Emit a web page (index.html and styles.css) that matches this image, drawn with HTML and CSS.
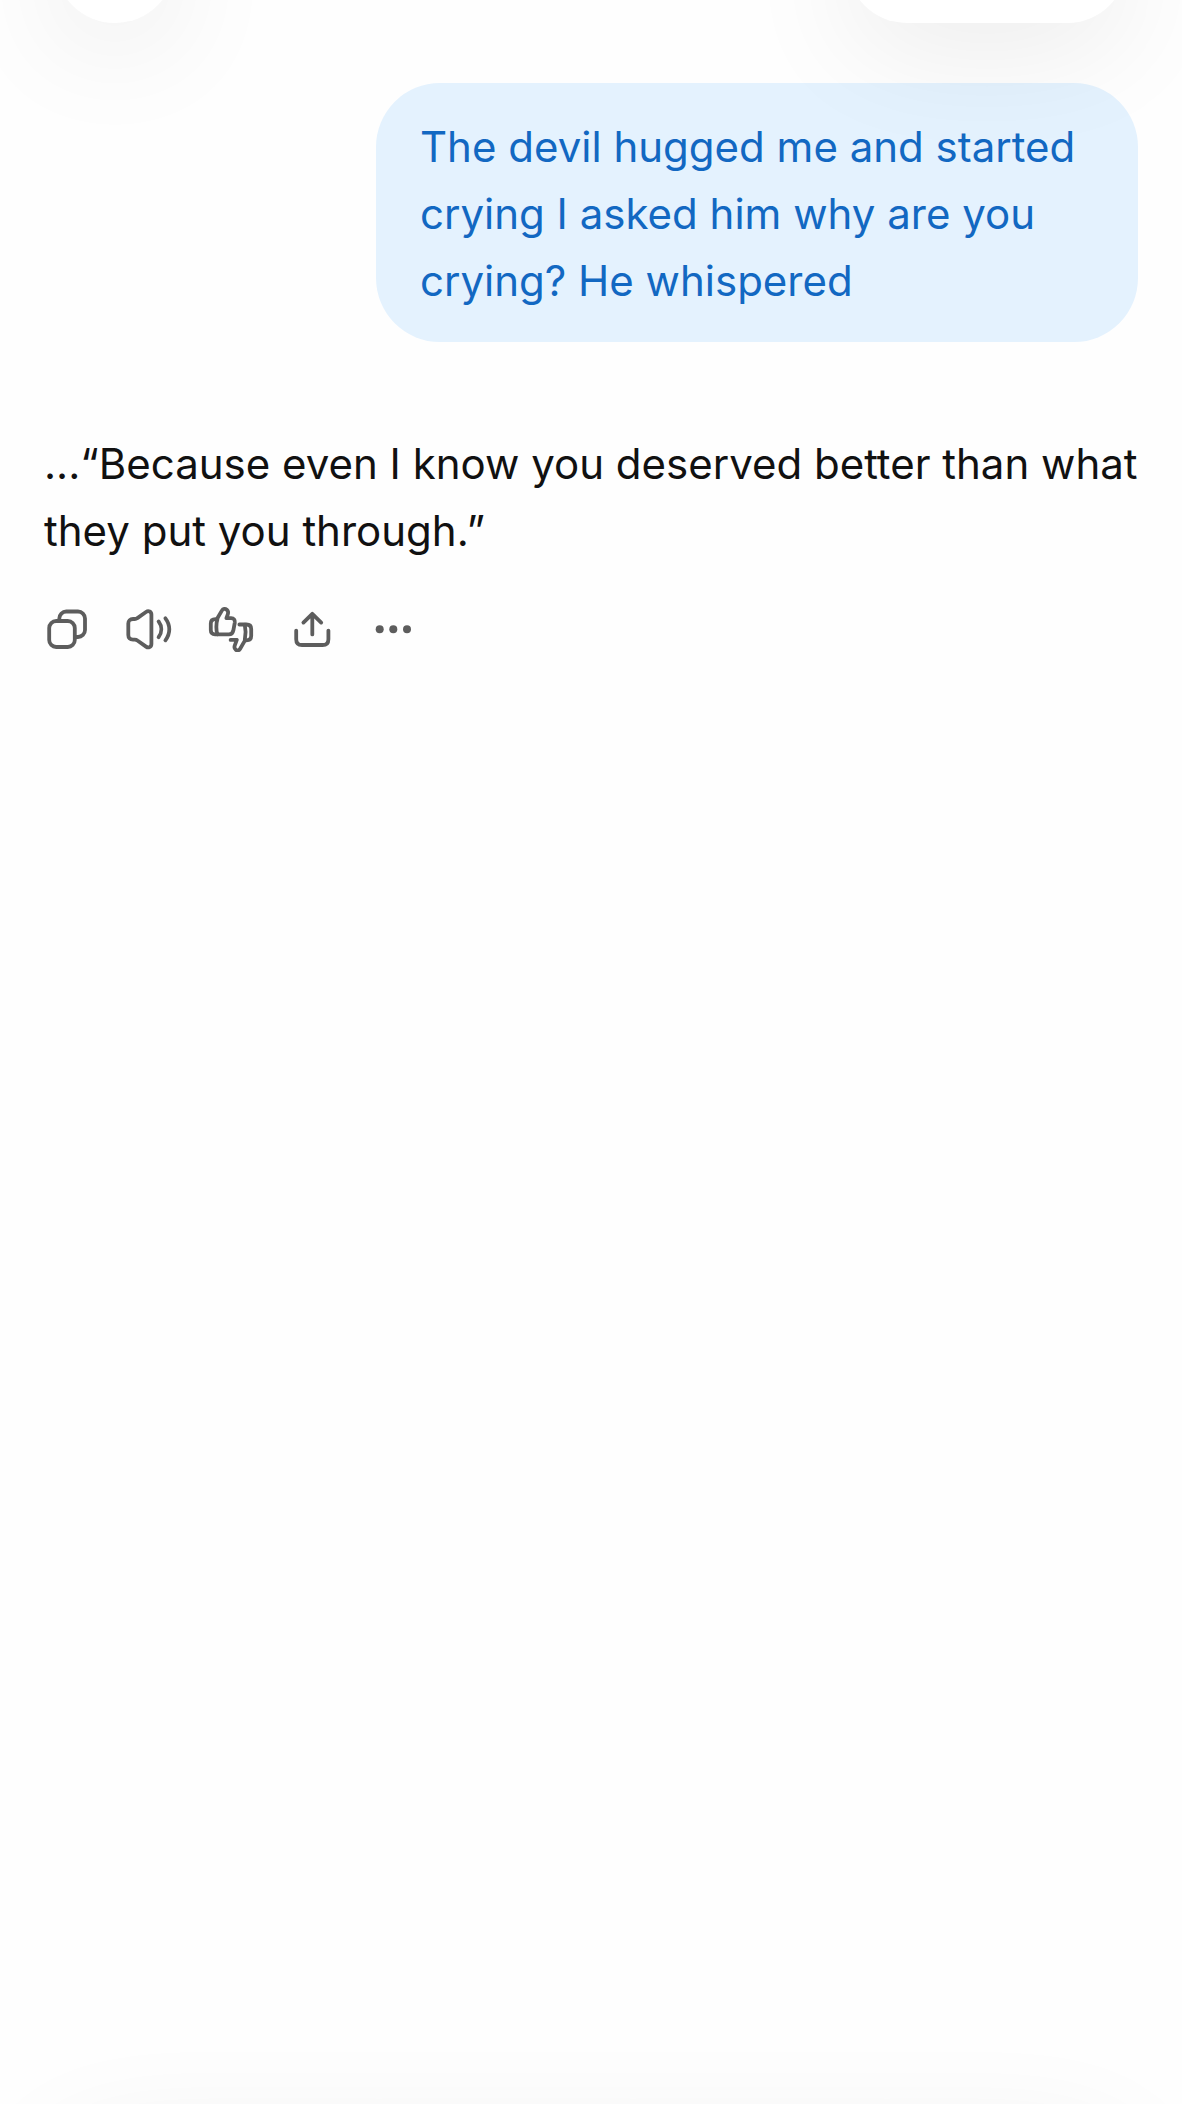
FILE: index.html
```html
<!DOCTYPE html>
<html lang="en">
<head>
    <meta charset="UTF-8">
    <meta name="viewport" content="width=device-width, initial-scale=1">
    <title>Chat</title>
    <link rel="stylesheet" href="styles.css">
</head>
<body>
    <header class="topbar">
        <button class="topbar-btn" aria-label="Menu"></button>
        <button class="topbar-btn topbar-pill" aria-label="Chat options"></button>
    </header>

    <main class="chat">
        <p class="bubble">The devil hugged me and started crying I asked him why are you crying? He whispered</p>

        <article class="answer">
            <p class="answer-text">...“Because even I know you deserved better than what they put you through.”</p>
            <div class="actions">
                <button class="action" aria-label="Copy">
                    <svg viewBox="0 0 46 46">
                        <rect x="5.2" y="15" width="25.6" height="26" rx="7"/>
                        <path d="M15.3 14v-1.5a7 7 0 0 1 7-7H34a7 7 0 0 1 7 7V24a7 7 0 0 1-7 7h-2"/>
                    </svg>
                </button>
                <button class="action" aria-label="Read aloud">
                    <svg viewBox="0 0 46 46">
                        <path d="M7 13h1.8c1 0 1.8-.3 2.6-.9L20 6c2.5-1.8 5.4-.4 5.4 2.6V38c0 3-2.9 4.4-5.4 2.6l-8.6-6.1c-.8-.6-1.6-.9-2.6-.9H7c-3 0-4.7-1.8-4.7-4.6V17.6C2.3 14.8 4 13 7 13z"/>
                        <path d="M32.6 15.4c3.6 4.8 3.6 11 0 15.8"/>
                        <path d="M39.4 12.3c5.2 6.8 5.2 15.2 0 22"/>
                    </svg>
                </button>
                <button class="action" aria-label="Rate response">
                    <svg viewBox="0 0 46 46">
                        <path d="M8.8 13.2L14 4.4c1-1.8 3.2-2 4.8-.7 1.5 1.3 1.6 3 1 4.7l-1.4 3.8h4.8c2.6 0 4 1.8 3.6 4.4l-1.4 7.5c-.5 2.6-2 4.3-4.6 4.3H7c-2.8 0-4.2-1.6-4.2-4.2v-6.6c0-3 1.8-4.4 4.6-4.4z"/>
                        <path d="M9.4 13.4c-1.4 4-1.4 11 0 14.8"/>
                        <path d="M31.4 18.5h7c3 0 4.8 1.6 4.8 4.5v6.8c0 3-1.8 4.6-4.8 4.6H37l-5 8.6c-.9 1.6-2.8 1.9-4.2.8-1.4-1.2-1.6-2.8-1-4.4l2-5.5h-6.2"/>
                        <path d="M36.8 18.8c.9 4 .9 11 0 15.2"/>
                    </svg>
                </button>
                <button class="action" aria-label="Share">
                    <svg viewBox="0 0 46 46">
                        <path d="M6.2 24.6v8.6c0 3.8 2 5.8 5.8 5.8h20.6c3.8 0 5.8-2 5.8-5.8v-8.6"/>
                        <path d="M22.3 28.4V8M13.4 16.6L22.3 7.8l8.9 8.8"/>
                    </svg>
                </button>
                <button class="action" aria-label="More">
                    <svg viewBox="0 0 46 46" class="dots">
                        <circle cx="7.7" cy="23.3" r="4"/>
                        <circle cx="21.3" cy="23.3" r="4"/>
                        <circle cx="35" cy="23.3" r="4"/>
                    </svg>
                </button>
            </div>
        </article>
    </main>

    <footer class="composer"></footer>
</body>
</html>
```

FILE: styles.css
```css
* {
    box-sizing: border-box;
}
body {
    margin: 0;
    background: #fefefe;
    color: #111;
    font-family: Inter, "Liberation Sans", sans-serif;
    font-size: 42px;
    line-height: 67px;
}
p {
    margin: 0;
}
button {
    padding: 0;
    border: none;
    background: none;
    cursor: pointer;
}

.topbar {
    position: fixed;
    top: -97px;
    left: 0;
    right: 0;
    display: flex;
    justify-content: space-between;
    padding: 0 55px;
    pointer-events: none;
}
.topbar-btn {
    width: 120px;
    height: 120px;
    border-radius: 60px;
    background: #fff;
    box-shadow: 0 24px 120px rgba(0, 0, 0, 0.08);
    pointer-events: auto;
}
.topbar-pill {
    width: 280px;
}

.chat {
    display: flex;
    flex-direction: column;
    gap: 88px;
    padding: 83px 24px 83px 44px;
}
.bubble {
    align-self: flex-end;
    max-width: 762px;
    margin-right: 20px;
    padding: 30px 44px 28px;
    border-radius: 64px;
    background: #e4f2fe;
    color: #1268c2;
}
.actions {
    display: flex;
    gap: 36px;
    margin-top: 42px;
}
.action {
    width: 46px;
    height: 46px;
    color: #5d5d5d;
}
.action svg {
    display: block;
    width: 100%;
    height: 100%;
    fill: none;
    stroke: currentColor;
    stroke-width: 3.8;
    stroke-linecap: round;
    stroke-linejoin: round;
}
.action .dots {
    fill: currentColor;
    stroke: none;
}

.composer {
    position: fixed;
    left: 50px;
    right: 50px;
    bottom: -150px;
    height: 130px;
    border-radius: 65px;
    background: #fff;
    box-shadow: 0 24px 120px rgba(0, 0, 0, 0.08);
}
```
